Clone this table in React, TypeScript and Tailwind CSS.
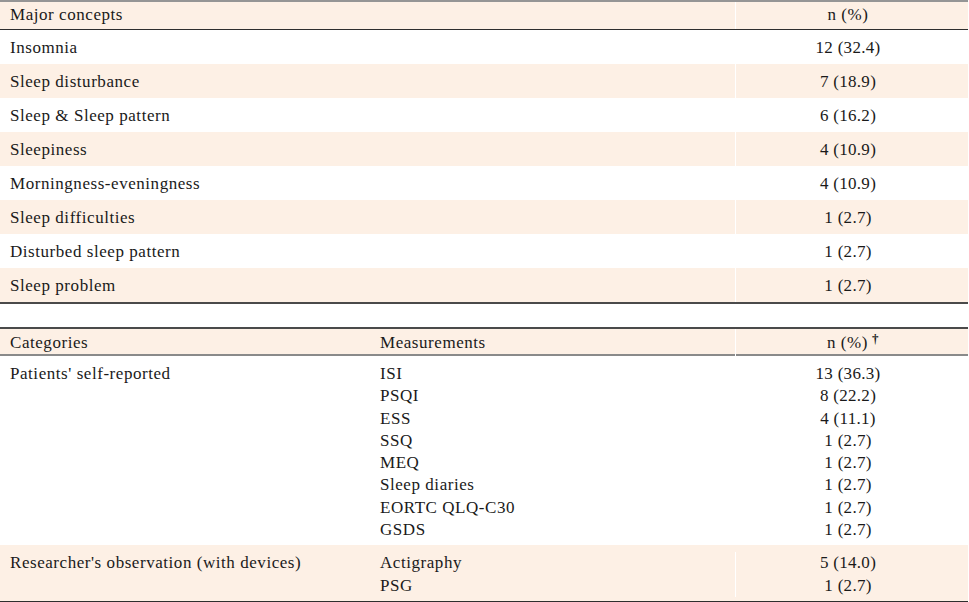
import React from "react";

const rows1: [string, string, boolean][] = [
  ["Insomnia", "12 (32.4)", false],
  ["Sleep disturbance", "7 (18.9)", true],
  ["Sleep & Sleep pattern", "6 (16.2)", false],
  ["Sleepiness", "4 (10.9)", true],
  ["Morningness-eveningness", "4 (10.9)", false],
  ["Sleep difficulties", "1 (2.7)", true],
  ["Disturbed sleep pattern", "1 (2.7)", false],
  ["Sleep problem", "1 (2.7)", true],
];

const self: [string, string][] = [
  ["ISI", "13 (36.3)"],
  ["PSQI", "8 (22.2)"],
  ["ESS", "4 (11.1)"],
  ["SSQ", "1 (2.7)"],
  ["MEQ", "1 (2.7)"],
  ["Sleep diaries", "1 (2.7)"],
  ["EORTC QLQ-C30", "1 (2.7)"],
  ["GSDS", "1 (2.7)"],
];

const obs: [string, string][] = [
  ["Actigraphy", "5 (14.0)"],
  ["PSG", "1 (2.7)"],
];

export default function App() {
  return (
    <div
      className="w-[969px] h-[602px] bg-white text-[#1a1a1a] text-[17px] tracking-[0.55px]"
      style={{ fontFamily: '"Liberation Serif", "Times New Roman", serif' }}
    >
      <div className="w-[968px]">
        {/* Table 1 */}
        <div className="border-t-2 border-[#959595]">
          <div className="grid grid-cols-[735px_1fr] h-[28px] bg-[#fdf0e5] border-b border-[#2e2e2e] items-center">
            <div className="pl-[10px] -mt-[1px]">Major concepts</div>
            <div className="h-full flex items-center justify-center border-l border-white pr-[8px] -mt-[1px]">n (%)</div>
          </div>
          {rows1.map(([a, b, s]) => (
            <div
              key={a}
              className={`grid grid-cols-[735px_1fr] h-[34px] items-center ${s ? "bg-[#fdf0e5]" : "bg-white"}`}
            >
              <div className="pl-[10px] mt-[1px]">{a}</div>
              <div className="h-full flex items-center justify-center border-l border-white pr-[8px] pt-[1px] tracking-[0.3px]">{b}</div>
            </div>
          ))}
          <div className="border-t-2 border-[#4a4a4a]" />
        </div>

        <div className="h-[23px]" />

        {/* Table 2 */}
        <div className="border-t-2 border-[#4a4a4a]">
          <div className="grid grid-cols-[370px_365px_1fr] h-[27px] bg-[#fdf0e5] border-b-2 border-[#8a8a8a] items-center">
            <div className="pl-[10px] mt-[1px]">Categories</div>
            <div className="pl-[10px] mt-[1px]">Measurements</div>
            <div className="h-full flex items-center justify-center border-l border-white pr-[8px] pt-[1px]">
              <span className="pl-[10px]">
                n (%)<sup className="text-[13px] relative -top-[5px] ml-[4px] font-bold">†</sup>
              </span>
            </div>
          </div>
          <div className="grid grid-cols-[370px_365px_1fr] pt-[7px] pb-[4px] leading-[22.3px] bg-white">
            <div className="pl-[10px]">Patients' self-reported</div>
            <div className="pl-[10px] flex flex-col">
              {self.map(([m]) => (
                <span key={m}>{m}</span>
              ))}
            </div>
            <div className="flex flex-col items-center border-l border-white pr-[8px] tracking-[0.3px]">
              {self.map(([m, v]) => (
                <span key={m}>{v}</span>
              ))}
            </div>
          </div>
          <div className="grid grid-cols-[370px_365px_1fr] pt-[7px] pb-[4px] leading-[22.3px] bg-[#fdf0e5] border-b-2 border-[#2e2e2e]">
            <div className="pl-[10px]">Researcher's observation (with devices)</div>
            <div className="pl-[10px] flex flex-col">
              {obs.map(([m]) => (
                <span key={m}>{m}</span>
              ))}
            </div>
            <div className="flex flex-col items-center border-l border-white pr-[8px] tracking-[0.3px]">
              {obs.map(([m, v]) => (
                <span key={m}>{v}</span>
              ))}
            </div>
          </div>
        </div>
      </div>
    </div>
  );
}
